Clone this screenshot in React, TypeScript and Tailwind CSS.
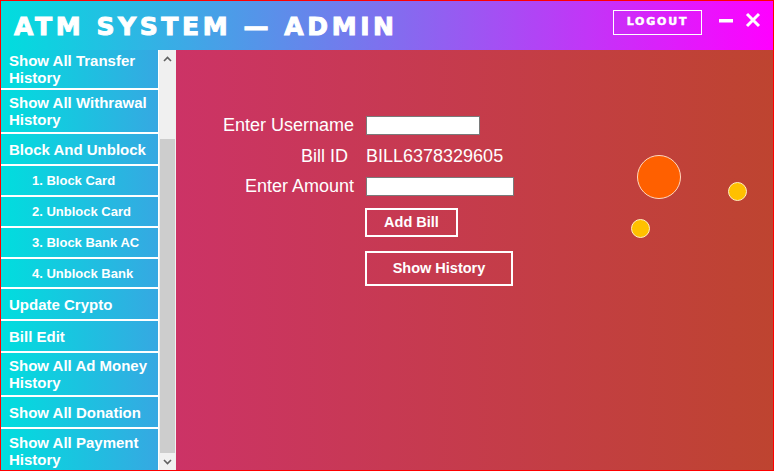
import React from 'react';

// Admin console: gradient title bar, side menu with a scrollbar, bill form.

type MenuItem = { label: string[]; h: string; sub?: boolean };

const MENU: MenuItem[] = [
  { label: ['Show All Transfer', 'History'], h: 'h-[38px]' },
  { label: ['Show All Withrawal', 'History'], h: 'h-[42px]' },
  { label: ['Block And Unblock'], h: 'h-[30px]' },
  { label: ['1. Block Card'], h: 'h-[29px]', sub: true },
  { label: ['2. Unblock Card'], h: 'h-[29px]', sub: true },
  { label: ['3. Block Bank AC'], h: 'h-[29px]', sub: true },
  { label: ['4. Unblock Bank'], h: 'h-[28px]', sub: true },
  { label: ['Update Crypto'], h: 'h-[30px]' },
  { label: ['Bill Edit'], h: 'h-[30px]' },
  { label: ['Show All Ad Money', 'History'], h: 'h-[42px]' },
  { label: ['Show All Donation'], h: 'h-[30px]' },
  { label: ['Show All Payment', 'History'], h: 'h-[43px]' },
];

function Header() {
  return (
    <div className="h-[49px] shrink-0 flex items-center bg-linear-to-r/srgb from-[#00dede] to-[#ff00ff] text-white">
      <div className="pl-[13px] pt-[1px] text-[25px] font-bold tracking-[3.6px] leading-none font-['DejaVu_Sans',sans-serif] [-webkit-text-stroke:1px_white]">
        ATM SYSTEM — ADMIN
      </div>
      <div className="ml-auto flex items-center">
        <button className="w-[89px] h-[25px] mt-[-7px] border border-white text-[11px] font-bold tracking-[1.8px] font-['DejaVu_Sans',sans-serif] [-webkit-text-stroke:0.5px_white] flex items-center justify-center">
          LOGOUT
        </button>
        <svg width="16" height="6" viewBox="0 0 16 6" className="ml-[16px] mt-[-9px]">
          <rect x="1" y="1" width="14" height="3.5" fill="white" />
        </svg>
        <svg width="16" height="16" viewBox="0 0 16 16" className="ml-[11px] mr-[12px] mt-[-11px]">
          <path d="M2 2 L14 14 M14 2 L2 14" stroke="white" strokeWidth="3" />
        </svg>
      </div>
    </div>
  );
}

function Sidebar() {
  return (
    <div className="w-[175px] shrink-0 flex bg-white overflow-hidden">
      <div className="w-[157px] flex flex-col gap-[2px] overflow-hidden">
        {MENU.map((m, i) => (
          <div
            key={i}
            className={`${m.h} shrink-0 flex flex-col justify-center bg-linear-to-r/srgb from-[#00dede] to-[#36a8e2] text-white font-bold font-['Liberation_Sans',Arial,sans-serif] ${
              m.sub ? 'pl-[31px] text-[13px] leading-[15px]' : 'pl-[8px] text-[15px] leading-[17px]'
            }`}
          >
            {m.label.map((l) => (
              <span key={l}>{l}</span>
            ))}
          </div>
        ))}
      </div>
      <div className="ml-[1px] w-[17px] flex flex-col bg-[#f0f0f0]">
        <div className="h-[17px] flex items-center justify-center">
          <svg width="9" height="6" viewBox="0 0 9 6">
            <path d="M1 5 L4.5 1.5 L8 5" stroke="#606060" strokeWidth="1.6" fill="none" />
          </svg>
        </div>
        <div className="h-[72px]" />
        <div className="flex-1 mx-[1px] bg-[#cdcdcd]" />
        <div className="h-[17px] flex items-center justify-center">
          <svg width="9" height="6" viewBox="0 0 9 6">
            <path d="M1 1 L4.5 4.5 L8 1" stroke="#606060" strokeWidth="1.6" fill="none" />
          </svg>
        </div>
      </div>
    </div>
  );
}

function BillForm() {
  const label = "w-[166px] pr-[12px] text-right text-[18px] leading-[19px] text-white";
  return (
    <div className="relative flex-1 bg-linear-to-r/srgb from-[#cc3366] to-[#be4430] pl-[24px] pt-[66px] font-['Liberation_Sans',Arial,sans-serif] overflow-hidden">
      <div className="flex items-center h-[19px]">
        <div className={label}>Enter Username</div>
        <input className="w-[114px] h-[19px] bg-white border border-[#7a7a7a] outline-none" />
      </div>
      <div className="flex items-center h-[19px] mt-[12px]">
        <div className={`${label} pr-[18px]`}>Bill ID</div>
        <div className="text-[18px] leading-[19px] text-white">BILL6378329605</div>
      </div>
      <div className="flex items-center h-[19px] mt-[11px]">
        <div className={label}>Enter Amount</div>
        <input className="w-[148px] h-[19px] bg-white border border-[#7a7a7a] outline-none" />
      </div>
      <div className="pl-[165px] mt-[12px] flex flex-col items-start">
        <button className="w-[93px] h-[29px] border-2 border-white text-white text-[14.5px] font-bold">
          Add Bill
        </button>
        <button className="mt-[14px] w-[148px] h-[35px] border-2 border-white text-white text-[14.5px] font-bold">
          Show History
        </button>
      </div>
      <div className="absolute left-[461px] top-[105px] w-[44px] h-[44px] rounded-full bg-[#ff6000] border border-[#ffd8c0]" />
      <div className="absolute left-[552px] top-[132px] w-[19px] h-[19px] rounded-full bg-[#ffc000] border border-[#fff0c0]" />
      <div className="absolute left-[455px] top-[169px] w-[19px] h-[19px] rounded-full bg-[#ffc000] border border-[#fff0c0]" />
    </div>
  );
}

export default function App() {
  return (
    <div className="w-[774px] h-[471px] flex flex-col border border-[#ff0000] overflow-hidden">
      <Header />
      <div className="flex flex-1 overflow-hidden">
        <Sidebar />
        <BillForm />
      </div>
    </div>
  );
}
